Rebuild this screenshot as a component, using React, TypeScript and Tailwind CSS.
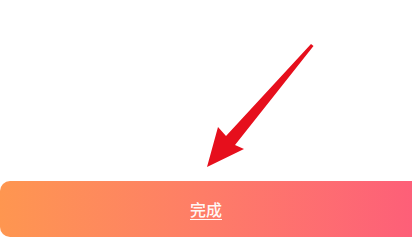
export default function App() {
  return (
    <div className="w-[412px] h-[239px] bg-white overflow-hidden flex flex-col">
      <svg width="412" height="181" viewBox="0 0 412 181" className="block shrink-0">
        <polygon
          points="311,44 313.5,46 235,145 244,149 207,167 218,127 226,136"
          fill="#e60f1c"
        />
      </svg>
      <button className="h-[56px] w-[412px] shrink-0 rounded-l-[10px] bg-gradient-to-r from-[#fe9650] to-[#fd5f78] flex items-center justify-center">
        <span
          className="text-[16px] font-medium text-white/95 underline underline-offset-[3px]"
          style={{ fontFamily: '"Noto Sans CJK SC", "Noto Sans", sans-serif' }}
        >
          完成
        </span>
      </button>
    </div>
  );
}
